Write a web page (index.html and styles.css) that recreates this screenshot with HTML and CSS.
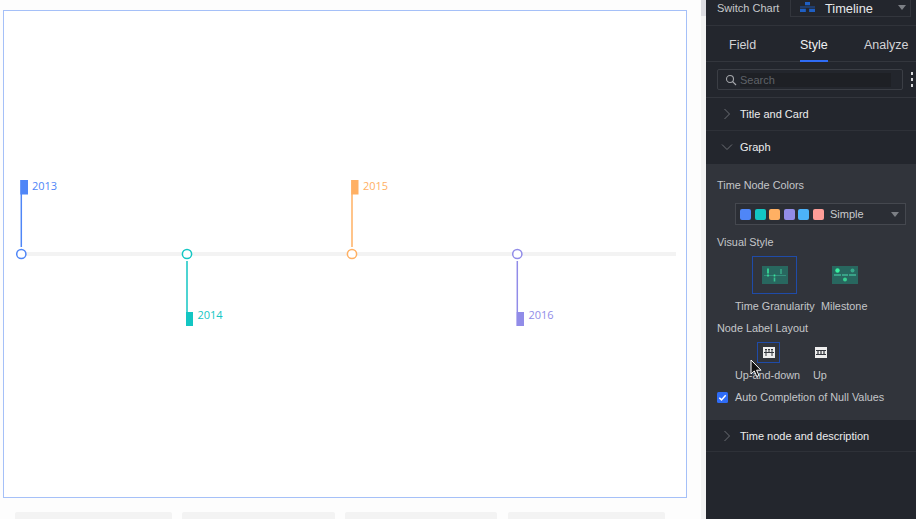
FILE: index.html
```html
<!DOCTYPE html>
<html lang="en">
<head>
<meta charset="utf-8">
<title>Timeline</title>
<link rel="stylesheet" href="styles.css">
</head>
<body>
<div class="page">
  <main class="main">
    <div class="canvas">
      <svg class="chart" width="684" height="488" viewBox="0 0 684 488">
        <rect x="18" y="242" width="655" height="4" fill="#f3f3f3"/>
        <g class="c-blue">
          <path d="M18.300 170V237" class="stem"/><rect x="17.300" y="170" width="7.700" height="14.500" class="flag"/>
          <circle cx="18.300" cy="244" r="4.600" class="node"/><text x="29" y="180">2013</text>
        </g>
        <g class="c-teal">
          <path d="M184 251V316" class="stem"/><rect x="183" y="302" width="7" height="14" class="flag"/>
          <circle cx="184" cy="244" r="4.600" class="node"/><text x="194.500" y="309">2014</text>
        </g>
        <g class="c-orange">
          <path d="M349 170V237" class="stem"/><rect x="348.300" y="170" width="7.200" height="14.500" class="flag"/>
          <circle cx="349" cy="244" r="4.600" class="node"/><text x="360" y="180">2015</text>
        </g>
        <g class="c-purple">
          <path d="M514.300 251V316" class="stem"/><rect x="513.700" y="302" width="7.300" height="14" class="flag"/>
          <circle cx="514.300" cy="244" r="4.600" class="node"/><text x="525.500" y="309">2016</text>
        </g>
      </svg>
    </div>
    <div class="cards">
      <div class="card card-a"></div>
      <div class="card card-b"></div>
      <div class="card card-c"></div>
      <div class="card card-d"></div>
    </div>
  </main>
  <div class="scrollbar"><div class="thumb"></div></div>
  <aside class="panel">
    <div class="switch">
      <span class="switch-label">Switch Chart</span>
      <div class="switch-select">
        <svg width="18" height="12" viewBox="0 0 18 12" class="tl-icon"><path d="M6 0h6v4H6zM0 8h7v4H0zM11 8h7v4h-7z" fill="#1f5fc4"/><path d="M0 6h18" stroke="#1f5fc4" stroke-width="1"/></svg>
        <span class="switch-value">Timeline</span>
        <span class="caret caret-top"></span>
      </div>
    </div>
    <nav class="tabs">
      <span class="tab">Field</span>
      <span class="tab tab-active">Style</span>
      <span class="tab">Analyze</span>
    </nav>
    <div class="search-row">
      <div class="search">
        <svg width="12" height="12" viewBox="0 0 12 12" class="search-icon"><circle cx="5" cy="5" r="3.500" fill="none" stroke="#a5a7ab" stroke-width="1.100"/><path d="M7.700 7.700L11 11" stroke="#a5a7ab" stroke-width="1.200"/></svg>
        <span class="search-input">Search</span>
      </div>
      <div class="dots"><i></i><i></i><i></i></div>
    </div>
    <div class="section section-title">
      <svg class="chev" width="8" height="12" viewBox="0 0 8 12"><path d="M1.500 1l5 5-5 5" fill="none" stroke="#6b6e74"/></svg>
      <span>Title and Card</span>
    </div>
    <div class="section section-graph">
      <svg class="chev-down" width="12" height="8" viewBox="0 0 12 8"><path d="M1 1.500l5 5 5-5" fill="none" stroke="#6b6e74"/></svg>
      <span>Graph</span>
    </div>
    <div class="graph-body">
      <div class="label label-colors">Time Node Colors</div>
      <div class="palette">
        <i class="sw sw1"></i><i class="sw sw2"></i><i class="sw sw3"></i><i class="sw sw4"></i><i class="sw sw5"></i><i class="sw sw6"></i>
        <span class="palette-name">Simple</span>
        <span class="caret caret-pal"></span>
      </div>
      <div class="label label-visual">Visual Style</div>
      <div class="styles">
        <div class="style-box style-box-on">
          <svg class="thumb-svg" width="26" height="18" viewBox="0 0 26 18"><rect width="26" height="18" fill="#28675f"/><path d="M2 9.500h22" stroke="#338f7c" stroke-width="1"/><path d="M19 3v5" stroke="#38a585" stroke-width="1.600"/><path d="M6 2.500v5M6 8.500v2M12.500 8.500v2" stroke="#37e59c" stroke-width="1.600"/><path d="M12.500 11.500v4" stroke="#38c090" stroke-width="1.600"/></svg>
        </div>
        <div class="style-box">
          <svg class="thumb-svg" width="26" height="18" viewBox="0 0 26 18"><rect width="26" height="18" fill="#28675f"/><circle cx="5.500" cy="4.500" r="2.200" fill="#37f0a0"/><circle cx="20.500" cy="4.500" r="2" fill="#37a889"/><circle cx="13" cy="13.500" r="2" fill="#37d090"/><path d="M2 9h7M10 9h6M17 9h7" stroke="#3fb795" stroke-width="1.500"/></svg>
        </div>
      </div>
      <div class="style-names"><span class="name-a">Time Granularity</span><span class="name-b">Milestone</span></div>
      <div class="label label-layout">Node Label Layout</div>
      <div class="layouts">
        <div class="layout-box layout-box-on">
          <svg width="12" height="11" viewBox="0 0 12 11"><rect width="12" height="11" fill="#eee"/><path d="M2 2.500h2M5 2.500h2M8 2.500h2M1 5.500h10M3 3v2M6 3v2M9 3v2M3 6v3M9 6v3" stroke="#33363d" stroke-width="1"/></svg>
        </div>
        <div class="layout-box">
          <svg width="12" height="11" viewBox="0 0 12 11"><rect width="12" height="11" fill="#eee"/><path d="M1 3.500h10M1 7.500h10" stroke="#33363d" stroke-width="1"/><path d="M3 3v5M6 3v5M9 3v5" stroke="#33363d" stroke-width="1.200"/></svg>
        </div>
      </div>
      <div class="layout-names"><span class="name-c">Up-and-down</span><span class="name-d">Up</span></div>
      <label class="check">
        <svg width="11" height="11" viewBox="0 0 11 11"><rect width="11" height="11" rx="1.500" fill="#2f6cf6"/><path d="M2.300 5.700l2.200 2.200 4.200-4.600" fill="none" stroke="#fff" stroke-width="1.500"/></svg>
        <span>Auto Completion of Null Values</span>
      </label>
    </div>
    <div class="section section-node">
      <svg class="chev" width="8" height="12" viewBox="0 0 8 12"><path d="M1.500 1l5 5-5 5" fill="none" stroke="#6b6e74"/></svg>
      <span>Time node and description</span>
    </div>
    <svg class="cursor" width="14" height="20" viewBox="0 0 14 20"><path d="M1 1v14l3.300-3 2.400 5.500 2.300-1-2.400-5.300H11z" fill="#111" stroke="#fff" stroke-width="1"/></svg>
  </aside>
</div>
</body>
</html>
```
FILE: styles.css
```css
* { box-sizing: border-box; }
html, body { margin: 0; height: 519px; overflow: hidden; }
body { font-family: "Liberation Sans", Arial, sans-serif; background: #fdfdfd; }
.page { display: flex; width: 916px; height: 519px; }

.main { width: 701px; padding: 10px 0 0 3px; background: #fdfdfd; }
.canvas { width: 684px; height: 488px; border: 1px solid #a5c0f8; background: #fff; }
.chart { display: block; margin: -1px; overflow: visible; }
.chart text { font: 11px "Open Sans", "Noto Sans", sans-serif; }
.stem { fill: none; stroke-width: 1.500; }
.node { fill: #fff; stroke-width: 1.500; }
.flag { stroke: none; }
.c-blue text, .c-blue .flag { fill: #4f86f7; } .c-blue .stem, .c-blue .node { stroke: #4f86f7; }
.c-teal text, .c-teal .flag { fill: #13c6c3; } .c-teal .stem, .c-teal .node { stroke: #13c6c3; }
.c-orange text, .c-orange .flag { fill: #ffb063; } .c-orange .stem, .c-orange .node { stroke: #ffb063; }
.c-purple text, .c-purple .flag { fill: #918ce8; } .c-purple .stem, .c-purple .node { stroke: #918ce8; }

.cards { display: flex; margin-top: 14px; padding-left: 12px; }
.card { height: 10px; background: #f3f3f3; border-radius: 2px 2px 0 0; }
.card-a { width: 157px; }
.card-b { width: 153px; margin-left: 10px; }
.card-c { width: 152px; margin-left: 10px; }
.card-d { width: 157px; margin-left: 11px; }

.scrollbar { width: 5px; background: #f3f3f3; }
.thumb { height: 16px; background: #dddde2; }

.panel { position: relative; width: 210px; height: 519px; background: #23262d; color: #e6e7e9; font-size: 11px; }

.switch { display: flex; align-items: center; height: 26px; padding: 0 5px 9px 11px; border-bottom: 1px solid #30333a; }
.switch-label { width: 73px; color: #c6c8cb; white-space: nowrap; }
.switch-select { display: flex; align-items: center; width: 121px; height: 19px; margin-top: -1px; padding: 0 4px 0 9px; border: 1px solid #33363d; border-top: 0; }
.tl-icon { width: 17px; height: 10px; margin-left: -1px; }
.switch-value { margin: 2px 0 0 9px; font-size: 12.800px; color: #e8e9eb; }
.caret { width: 0; height: 0; border-left: 4px solid transparent; border-right: 4px solid transparent; border-top: 5px solid #7c7f85; }
.caret-top { margin-left: auto; }

.tabs { display: flex; height: 36px; border-bottom: 1px solid #33363d; position: relative; }
.tab { font-size: 12.500px; line-height: 38px; color: #d3d4d7; position: absolute; top: 0; }
.tab:nth-child(1) { left: 23px; }
.tab:nth-child(2) { left: 94px; height: 36px; border-bottom: 2px solid #2f6cf6; color: #f0f0f2; }
.tab:nth-child(3) { left: 158px; }

.search-row { display: flex; align-items: center; height: 36px; padding-left: 11px; border-bottom: 1px solid #33363d; }
.search { display: flex; align-items: center; width: 186px; height: 21px; padding-left: 7px; border: 1px solid #3b3e45; border-radius: 2px; }
.search-icon { flex: none; }
.search-input { width: 151px; margin-left: 3px; height: 14px; line-height: 14px; background: #1e2025; color: #5f6268; font-size: 11px; }
.dots { display: flex; flex-direction: column; gap: 3px; margin-left: 8px; }
.dots i { display: block; width: 2px; height: 3px; background: #d6d7da; }

.section { display: flex; align-items: center; height: 33px; padding-left: 17px; border-bottom: 1px solid #2e3138; font-size: 11px; color: #eceded; }
.section span { margin-left: 9px; }
.section-graph { border-bottom: 0; height: 33px; padding: 0 0 2px 15px; }
.section-graph span { margin-left: 7px; }
.section-node { height: 32px; }

.graph-body { height: 256px; padding: 15px 0 0 11px; background: #31343b; color: #c4c6c9; position: relative; font-size: 10.850px; }
.label { line-height: 13px; white-space: nowrap; }
.palette { display: flex; align-items: center; width: 171px; height: 22px; margin: 11px 0 0 18px; padding: 0 6px 0 4px; border: 1px solid #45484f; background: #2b2e35; }
.sw { display: block; width: 11px; height: 11px; margin-right: 3.500px; border-radius: 2px; }
.sw1 { background: #4f86f7; } .sw2 { background: #13c6c3; } .sw3 { background: #ffb063; }
.sw4 { background: #918ce8; } .sw5 { background: #4cb2f9; } .sw6 { background: #ff9d97; }
.palette-name { margin-left: 3px; font-size: 11px; color: #c9cacd; }
.caret-pal { margin-left: auto; }
.label-visual { margin-top: 11px; }
.styles { display: flex; margin: 7px 0 0 35px; }
.style-box { display: flex; align-items: center; justify-content: center; width: 45px; height: 38px; border: 1px solid transparent; }
.style-box + .style-box { margin-left: 25px; }
.style-box-on { border-color: #1f4ba8; }
.style-names { position: relative; height: 13px; margin-top: 6px; }
.style-names span, .layout-names span { position: absolute; top: 0; white-space: nowrap; }
.name-a { left: 18px; }
.name-b { left: 104px; }
.label-layout { margin-top: 9px; }
.layouts { display: flex; margin: 7px 0 0 40px; }
.layout-box { display: flex; align-items: center; justify-content: center; width: 23px; height: 21px; border: 1px solid transparent; }
.layout-box + .layout-box { margin-left: 29px; }
.layout-box-on { border-color: #1f4ba8; }
.layout-names { position: relative; height: 13px; margin-top: 6px; }
.name-c { left: 18px; }
.name-d { left: 96px; }
.check { display: flex; align-items: center; margin-top: 9px; line-height: 13px; white-space: nowrap; }
.check svg { flex: none; margin-right: 7px; }

.cursor { position: absolute; left: 44px; top: 359px; }
```
